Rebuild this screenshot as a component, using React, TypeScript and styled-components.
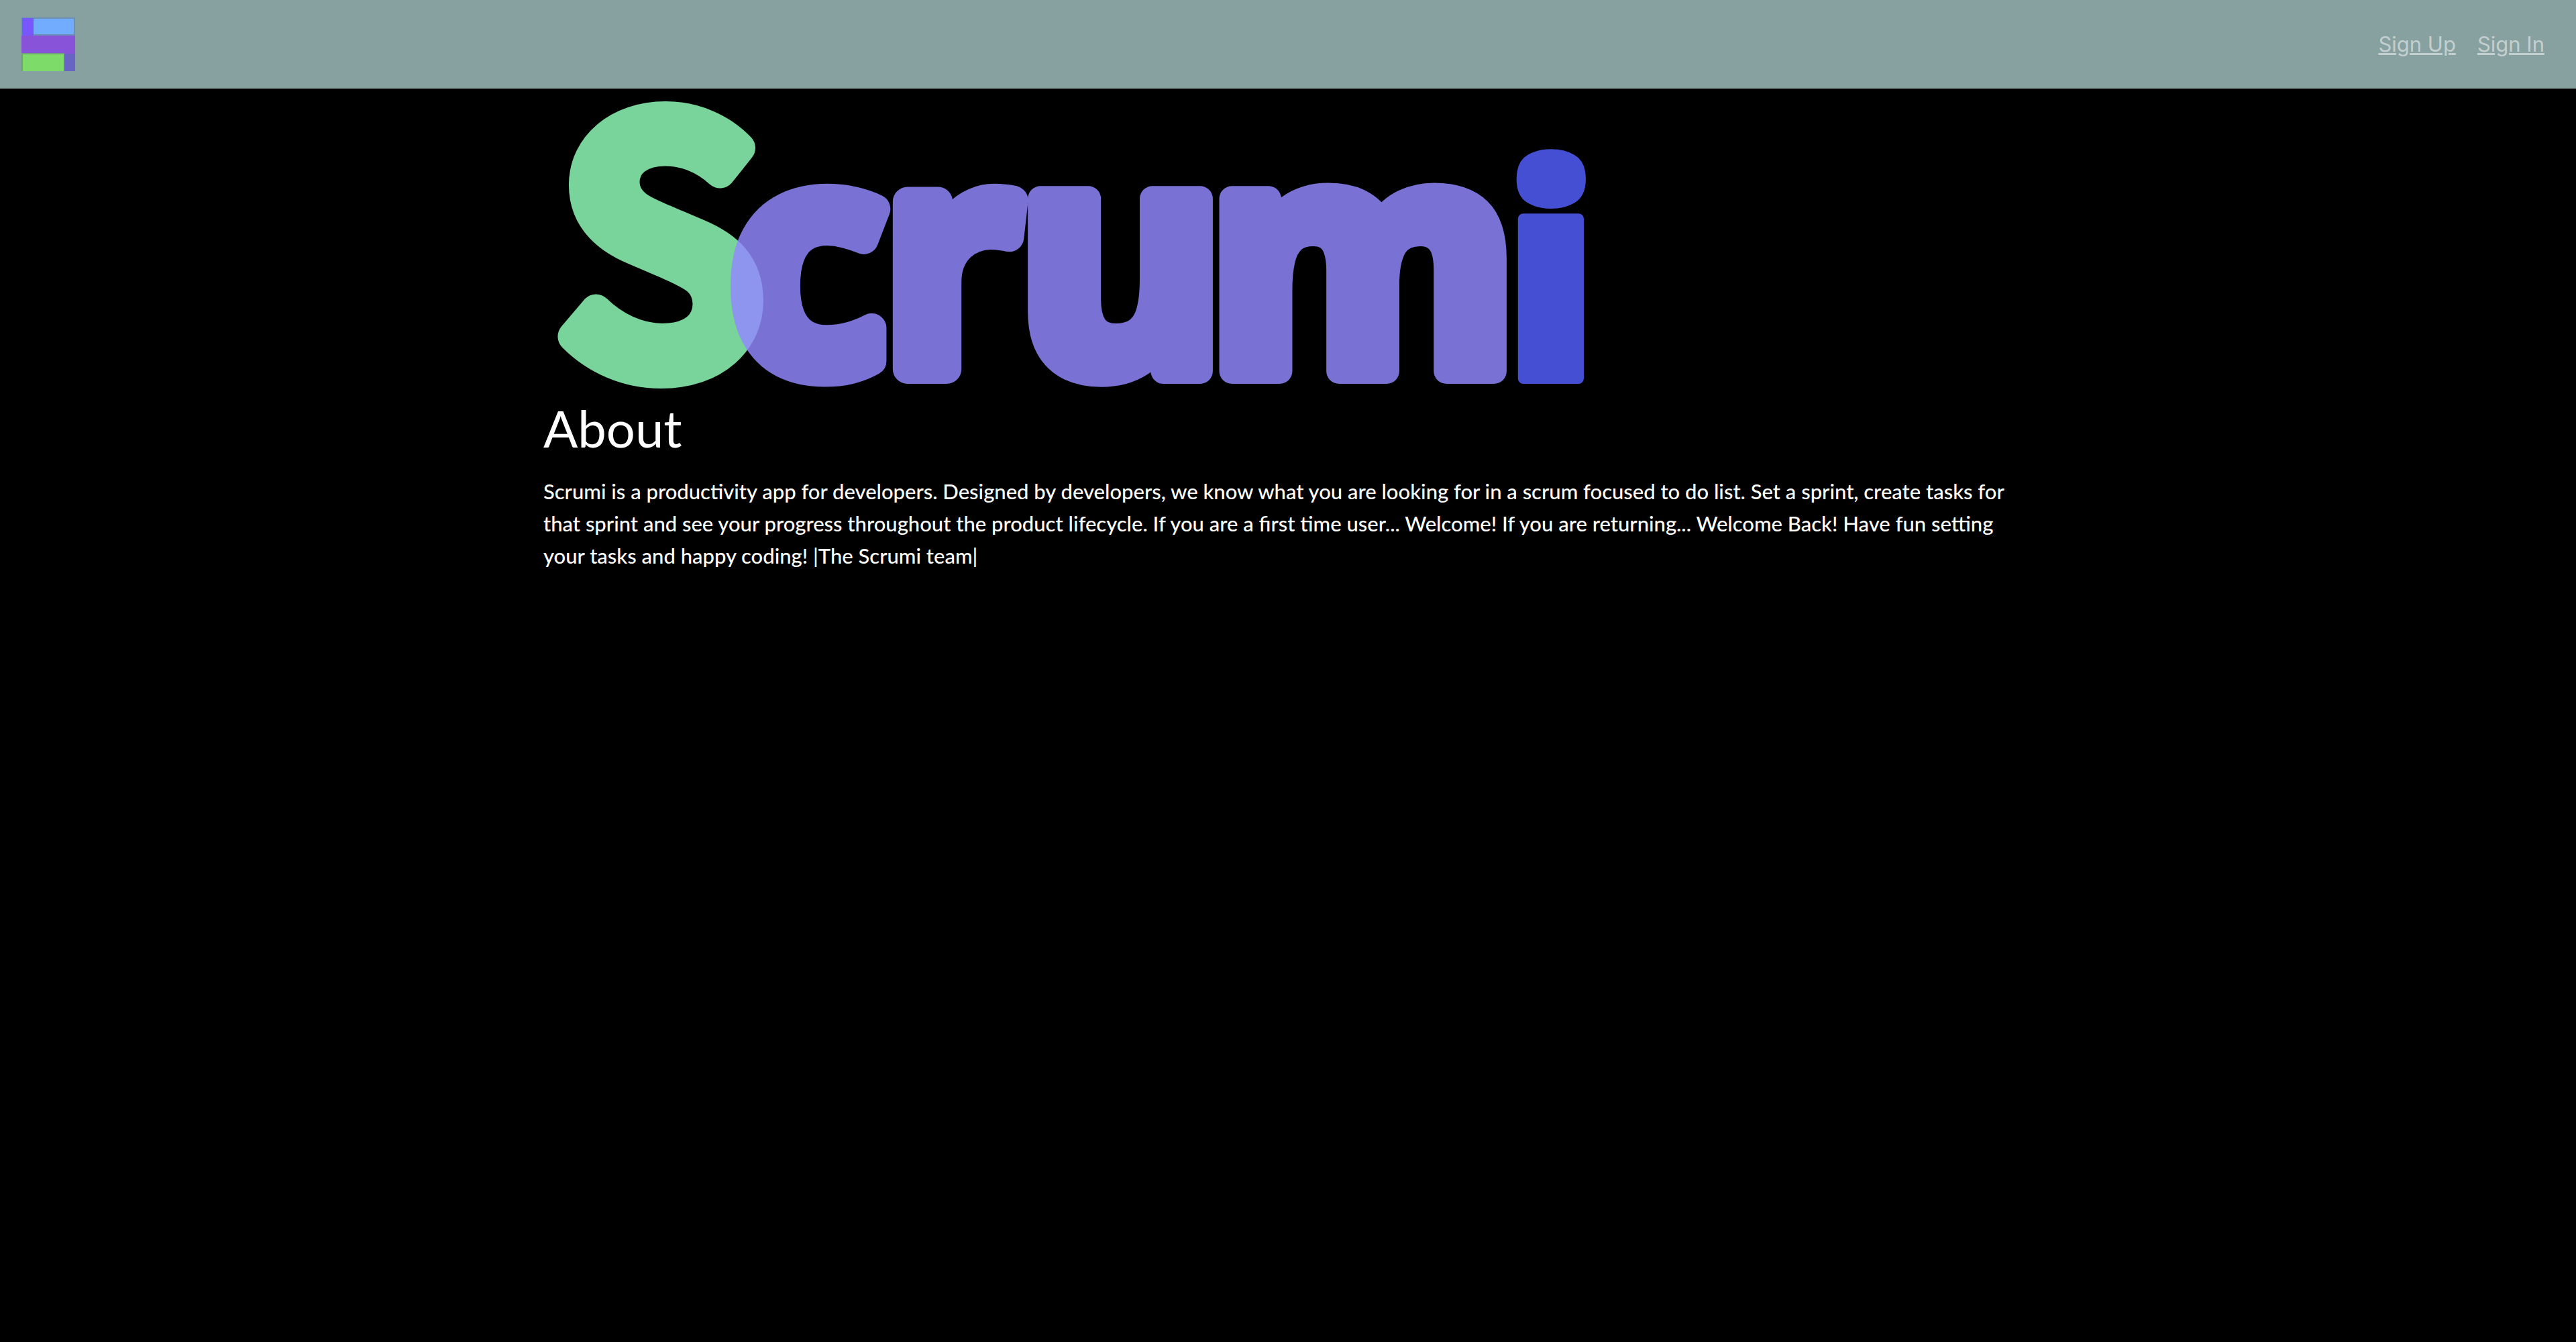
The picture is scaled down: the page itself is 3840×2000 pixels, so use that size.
import React from 'react';
import styled, { createGlobalStyle } from 'styled-components';

const GlobalStyle = createGlobalStyle`
  body {
    margin: 0;
    background: #000;
    color: #fff;
    font-family: Lato, "Noto Sans", sans-serif;
  }
`;

const NavBar = styled.nav`
  display: flex;
  align-items: center;
  justify-content: space-between;
  height: 132px;
  padding: 0 47px 0 32px;
  box-sizing: border-box;
  background: #87a0a0;
`;

const BrandLink = styled.a`
  display: block;
  width: 80px;
  height: 80px;
`;

const BrandMark = styled.svg`
  display: block;
  width: 100%;
  height: 100%;
`;

const NavLinks = styled.div`
  display: flex;
  gap: 32px;
`;

const NavLink = styled.a`
  color: #c3cfcf;
  font-family: Inter, "Liberation Sans", sans-serif;
  font-size: 31px;
  line-height: 48px;
  text-decoration: underline;
`;

const Main = styled.main`
  max-width: 2220px;
  margin: 0 auto;
`;

const Wordmark = styled.svg`
  display: block;
  width: 1600px;
  max-width: 100%;
  overflow: visible;
`;

const Letter = styled.text<{ $tone: string; $size: number; $edge: number; $weight: number; $face?: string }>`
  font-family: ${(p) => p.$face ?? '"Noto Sans"'}, sans-serif;
  font-weight: ${(p) => p.$weight};
  font-size: ${(p) => p.$size}px;
  fill: ${(p) => p.$tone};
  stroke: ${(p) => p.$tone};
  stroke-width: ${(p) => p.$edge}px;
  stroke-linejoin: round;
  opacity: 0.83;
`;

const Title = styled.h1`
  margin: 0 0 22px;
  font-size: 76px;
  font-weight: 400;
  line-height: 96px;
`;

const Copy = styled.p`
  margin: 0;
  font-size: 31px;
  font-weight: 500;
  line-height: 48px;
`;

const GREEN = '#92ffbb';
const VIOLET = '#9289ff';
const BLUE = '#5360ff';

const letters = [
  { char: 'S', x: 22, y: 417, tone: GREEN, size: 500, edge: 46, weight: 500, face: '"Noto Sans CJK SC"' },
  { char: 'c', x: 278, y: 418, tone: VIOLET, size: 460, edge: 44, weight: 600 },
  { char: 'r', x: 507, y: 418, tone: VIOLET, size: 460, edge: 44, weight: 600 },
  { char: 'u', x: 708, y: 421, tone: VIOLET, size: 470, edge: 38, weight: 700 },
  { char: 'm', x: 992, y: 421, tone: VIOLET, size: 470, edge: 38, weight: 700 },
  { char: 'i', x: 1432, y: 432, tone: BLUE, size: 430, edge: 16, weight: 900 },
];

export default function App() {
  return (
    <>
      <GlobalStyle />
      <NavBar>
        <BrandLink href="#" aria-label="Home">
          <BrandMark viewBox="0 0 80 80" aria-hidden="true">
            <rect width="80" height="80" fill="#6c8fb8" />
            <rect x="1" y="1" width="17" height="26" fill="#7857ff" />
            <rect x="18" y="2" width="60" height="23" fill="#72acff" />
            <rect y="27" width="80" height="27" fill="#8853d9" />
            <rect y="53" width="64" height="27" fill="#6f9f75" />
            <rect x="2" y="55" width="61" height="25" fill="#7cdb69" />
            <rect x="64" y="54" width="16" height="26" fill="#6963c3" />
          </BrandMark>
        </BrandLink>
        <NavLinks>
          <NavLink href="#signup">Sign Up</NavLink>
          <NavLink href="#signin">Sign In</NavLink>
        </NavLinks>
      </NavBar>
      <Main>
        <Wordmark viewBox="0 0 1600 458" role="img" aria-label="Scrumi">
          {letters.map((l) => (
            <Letter
              key={l.char}
              x={l.x}
              y={l.y}
              $tone={l.tone}
              $size={l.size}
              $edge={l.edge}
              $weight={l.weight}
              $face={l.face}
            >
              {l.char}
            </Letter>
          ))}
        </Wordmark>
        <Title>About</Title>
        <Copy>
          Scrumi is a productivity app for developers. Designed by developers, we know what you are looking for in a
          scrum focused to do list. Set a sprint, create tasks for that sprint and see your progress throughout the
          product lifecycle. If you are a first time user... Welcome! If you are returning... Welcome Back! Have fun
          setting your tasks and happy coding! |The Scrumi team|
        </Copy>
      </Main>
    </>
  );
}
